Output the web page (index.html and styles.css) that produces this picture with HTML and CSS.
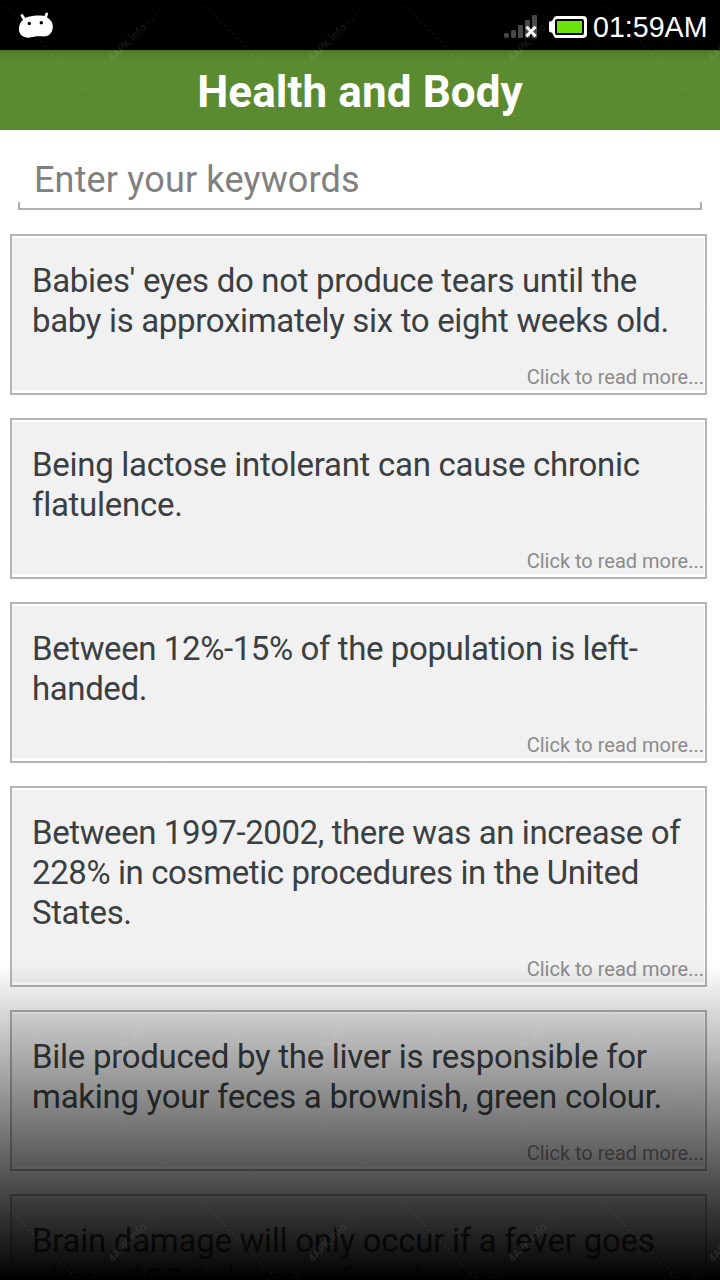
FILE: index.html
```html
<!DOCTYPE html>
<html lang="en">
<head>
<meta charset="utf-8">
<title>Health and Body</title>
<link rel="stylesheet" href="styles.css">
</head>
<body>
<div class="screen">
  <div class="status-bar">
    <svg class="robot" width="36" height="30" viewBox="0 0 36 30">
      <path d="M4 5.500L6.500 9.500M28.700 4L27 8.500" stroke="#fff" stroke-width="2.800" stroke-linecap="round"/>
      <path d="M6 9C10 5.500 24 4.500 28.500 7C33 9.500 35 13 34.800 17C34.500 23.500 30.500 26.500 25.500 26.500C22 26.300 20 26 16 26.800C11 28.300 5 28 2.300 24C-.5 19.500 1 12.500 6 9Z" fill="#fff"/>
      <circle cx="11.300" cy="13.500" r="1.700"/><circle cx="23.300" cy="12.800" r="1.700"/>
    </svg>
    <div class="status-right">
      <svg class="signal" width="36" height="26" viewBox="0 0 36 26">
        <g fill="#484848"><rect x="0" y="19" width="5" height="5" rx="2"/><rect x="7" y="16" width="5" height="8" rx="1.500"/><rect x="14" y="11" width="5" height="13" rx="1"/><rect x="21" y="6" width="5" height="18" rx="1"/><rect x="28" y="1" width="5" height="23" rx="1"/></g>
        <path d="M22.500 12.800L31.500 22.200M31.500 12.800L22.500 22.200" stroke="#fff" stroke-width="3"/>
      </svg>
      <svg class="battery" width="38" height="22" viewBox="0 0 38 22">
        <path d="M0 7Q0 5 2 5H3L5 1.500Q5.700 0 7.500 0H34Q38 0 38 4V18Q38 22 34 22H7.500Q5.700 22 5 20.500L3 16.500H2Q0 16.500 0 14.500Z" fill="#fff"/>
        <rect x="6" y="3" width="29" height="16" rx="2"/><rect x="8" y="5" width="25" height="12" fill="#69e50d"/>
      </svg>
      <span class="clock">01:59AM</span>
    </div>
  </div>
  <header class="title-bar"><h1 class="title">Health and Body</h1></header>
  <div class="search"><input class="search-input" type="text" placeholder="Enter your keywords"></div>
  <main class="facts">
    <article class="fact"><p class="fact-text">Babies' eyes do not produce tears until the<br>baby is approximately six to eight weeks old.</p><span class="more">Click to read more...</span></article>
    <article class="fact"><p class="fact-text loose">Being lactose intolerant can cause chronic<br>flatulence.</p><span class="more">Click to read more...</span></article>
    <article class="fact"><p class="fact-text tight">Between 12%-15% of the population is left-<br>handed.</p><span class="more">Click to read more...</span></article>
    <article class="fact"><p class="fact-text tight">Between 1997-2002, there was an increase of<br>228% in cosmetic procedures in the United<br>States.</p><span class="more">Click to read more...</span></article>
    <article class="fact"><p class="fact-text loose">Bile produced by the liver is responsible for<br>making your feces a brownish, green colour.</p><span class="more">Click to read more...</span></article>
    <article class="fact"><p class="fact-text loose">Brain damage will only occur if a fever goes<br>above 107.6 degrees farenheit.</p></article>
  </main>
  <div class="fade"></div>
  <svg class="watermark" width="720" height="1280">
    <defs>
      <pattern id="mark" width="200" height="200" patternUnits="userSpaceOnUse">
        <path d="M5 6L162 164M12 160L105 67M148 24L160 12" stroke="#fff" stroke-opacity=".8" stroke-width="1.200" stroke-dasharray="2 3.500" fill="none"/>
        <text class="mark-text" transform="translate(113 63) rotate(-46)">4APK.info</text>
      </pattern>
    </defs>
    <rect width="720" height="1280" fill="url(#mark)"/>
  </svg>
</div>
</body>
</html>
```
FILE: styles.css
```css
* { box-sizing: border-box; }
body { margin: 0; font-family: Roboto, sans-serif; background: #fff; }
.screen { position: relative; width: 720px; height: 1280px; overflow: hidden; background: #fff; }
.status-bar { display: flex; justify-content: space-between; height: 50px; padding: 10px 12px 0 18px; background: #000; }
.status-right { display: flex; align-items: flex-start; }
.signal { margin: 4px 9px 0 0; }
.battery { margin: 6px 6px 0 0; }
.clock { width: 115px; font: 28.600px/34px "Liberation Sans", sans-serif; color: #fff; white-space: nowrap; }
.title-bar { height: 80px; background: linear-gradient(#4a6a25 0, #52802b 2px, #5b8b30 12px, #5b8b30 100%); text-align: center; }
.title { margin: 0; padding-top: 2px; font-size: 44px; font-weight: 700; line-height: 80px; letter-spacing: .1px; color: #fff; }
.search { display: flex; padding: 20px 18px 24px; }
.search-input {
  width: 100%; height: 60px; padding: 0 16px; border: 0; outline: 0;
  font: 400 36px/60px Roboto, sans-serif; letter-spacing: .16px; color: #333;
  background: linear-gradient(#b1b1b1, #b1b1b1) 0 100% / 100% 2px no-repeat,
    linear-gradient(#b1b1b1, #b1b1b1) 0 100% / 2px 8px no-repeat,
    linear-gradient(#b1b1b1, #b1b1b1) 100% 100% / 2px 8px no-repeat;
}
.search-input::placeholder { color: #808080; opacity: 1; }
.facts { display: flex; flex-direction: column; gap: 23px; padding: 0 13px 0 10px; }
.fact {
  display: flex; flex-direction: column; flex: none; border: 2px solid #b4b4b4;
  padding: 25px 1px 2px 20px; background: #f1f1f1;
  box-shadow: inset 0 2px #fff, inset 0 -3px #fff, inset -1px 0 #fff;
}
.fact-text { margin: 0; font-size: 33px; line-height: 40px; letter-spacing: -.33px; color: #3a4042; white-space: nowrap; }
.loose { letter-spacing: -.28px; }
.tight { letter-spacing: -.4px; }
.more { align-self: flex-end; margin-top: 22px; font-size: 20px; line-height: 28px; color: #8b8b8b; white-space: nowrap; }
.fade { position: absolute; left: 0; right: 0; top: 964px; bottom: 0; background: linear-gradient(transparent, #000 316px); }
.watermark { position: absolute; left: 0; top: 0; opacity: .1; pointer-events: none; }
.mark-text { font: 11px Roboto, sans-serif; fill: #fff; }
```
